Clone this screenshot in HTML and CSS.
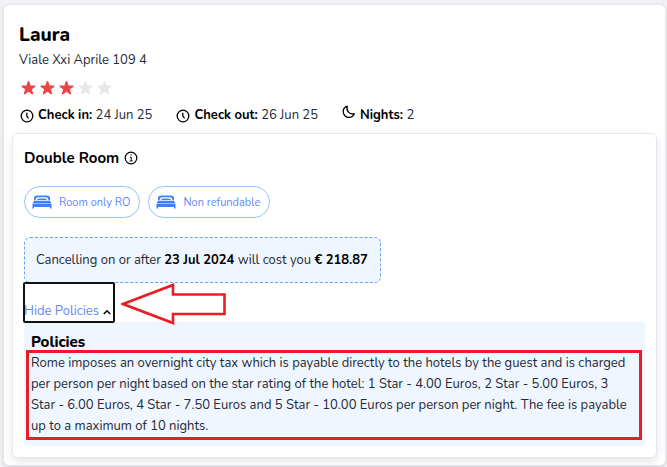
FILE: index.html
```html
<!DOCTYPE html>
<html lang="en">
<head>
    <meta charset="UTF-8">
    <meta name="viewport" content="width=device-width, initial-scale=1.0">
    <title>Laura - Booking</title>
    <link rel="stylesheet" href="styles.css">
</head>
<body>
    <svg class="symbols" aria-hidden="true">
        <symbol id="star" viewBox="0 0 20 20">
            <path d="M9.05 2.93c.3-.92 1.6-.92 1.9 0l1.5 4.6h4.84c.97 0 1.37 1.24.59 1.81l-3.92 2.85 1.5 4.6c.3.92-.76 1.69-1.54 1.12L10 15.06l-3.92 2.85c-.78.57-1.84-.2-1.54-1.12l1.5-4.6-3.92-2.85c-.78-.57-.38-1.81.59-1.81h4.84z" fill="currentColor"/>
        </symbol>
        <symbol id="clock" viewBox="0 0 14 14">
            <circle cx="7" cy="7" r="5.8" fill="none" stroke="currentColor" stroke-width="1.3"/>
            <path d="M6.8 3.8v3.3l1.8 2.2" fill="none" stroke="currentColor" stroke-width="1.3"/>
        </symbol>
        <symbol id="moon" viewBox="0 0 14 14">
            <path d="M5.2 1.2C2.8 2 1.2 4 1.2 6.6c0 3.2 2.5 5.8 5.8 5.8 2.4 0 4.4-1.4 5.4-3.6C7.4 9.8 4 6 5.2 1.2z" fill="none" stroke="currentColor" stroke-width="1.3" stroke-linejoin="round"/>
        </symbol>
        <symbol id="bed" viewBox="0 0 20 14">
            <path d="M2 5.2V3Q2 .5 5 .5h10q3 0 3 2.5v2.2h-1.5Q16 2.2 14 2.2H6Q4 2.2 3.5 5.2z" fill="currentColor"/>
            <path d="M5 5q.3-1.5 1.8-1.5h6.4Q14.7 3.5 15 5zM2 5.7h16l1.5 2.8H.5zM.5 9h19v4.5H18V12H2v1.5H.5z" fill="currentColor"/>
        </symbol>
    </svg>

    <main class="hotel">
        <header class="hotel-header">
            <h1 class="hotel-name">Laura</h1>
            <p class="hotel-address">Viale Xxi Aprile 109 4</p>
            <div class="stars" role="img" aria-label="3 of 5 stars">
                <svg class="star active"><use href="#star"/></svg>
                <svg class="star active"><use href="#star"/></svg>
                <svg class="star active"><use href="#star"/></svg>
                <svg class="star"><use href="#star"/></svg>
                <svg class="star"><use href="#star"/></svg>
            </div>
            <div class="dates">
                <div class="date"><svg class="icon"><use href="#clock"/></svg><span><b>Check in:</b> 24 Jun 25</span></div>
                <div class="date"><svg class="icon"><use href="#clock"/></svg><span><b>Check out:</b> 26 Jun 25</span></div>
                <div class="date"><svg class="icon icon-moon"><use href="#moon"/></svg><span><b>Nights:</b> 2</span></div>
            </div>
        </header>

        <section class="room">
            <h2 class="room-name">Double Room
                <svg class="icon" viewBox="0 0 14 14">
                    <circle cx="7" cy="7" r="5.8" fill="none" stroke="currentColor" stroke-width="1.2"/>
                    <path d="M5.8 6.3H7.2V9.8M5.8 9.9H8.6M6.4 4H7.8" fill="none" stroke="currentColor" stroke-width="1"/>
                </svg>
            </h2>
            <div class="tags">
                <span class="tag"><svg class="bed"><use href="#bed"/></svg>Room only RO</span>
                <span class="tag"><svg class="bed"><use href="#bed"/></svg>Non refundable</span>
            </div>
            <p class="cancellation">Cancelling on or after <b>23 Jul 2024</b> will cost you <b>€ 218.87</b></p>
            <div class="toggle-row">
                <button class="toggle" type="button" aria-expanded="true" aria-controls="policies">Hide Policies
                    <svg class="chevron" viewBox="0 0 8 6"><path d="M.8 5L4 1.8 7.2 5" fill="none" stroke="currentColor" stroke-width="1.6"/></svg>
                </button>
                <svg class="arrow" viewBox="0 0 106 42" aria-hidden="true">
                    <path d="M2 21L52 2V11.5H103.5V31H52V40z" fill="none" stroke="currentColor" stroke-width="2.6"/>
                </svg>
            </div>
            <div class="policies" id="policies">
                <h3 class="policies-title">Policies</h3>
                <p class="policies-text">Rome imposes an overnight city tax which is payable directly to the hotels by the guest and is charged per person per night based on the star rating of the hotel: 1 Star - 4.00 Euros, 2 Star - 5.00 Euros, 3 Star - 6.00 Euros, 4 Star - 7.50 Euros and 5 Star - 10.00 Euros per person per night. The fee is payable up to a maximum of 10 nights.</p>
            </div>
        </section>
    </main>
</body>
</html>
```
FILE: styles.css
```css
* {
    margin: 0;
    padding: 0;
    box-sizing: border-box;
}

body {
    padding: 4px 1px 1px 3px;
    background-color: #f0f1f4;
    color: #1f2937;
    font-family: Nunito, Lato, sans-serif;
    font-size: 13px;
    font-weight: 400;
    line-height: 21px;
}

b {
    color: #000;
    font-weight: 700;
}

.symbols {
    display: none;
}

.hotel {
    padding: 16px 8px 7px;
    border: 1px solid #e5e7eb;
    border-radius: 6px;
    background-color: #fff;
    box-shadow: 0 1px 3px rgba(0, 0, 0, 0.15);
}

.hotel-header {
    padding: 0 7px 7px;
}

.hotel-name {
    color: #000;
    font-size: 19px;
    font-weight: 800;
    line-height: 28px;
}

.hotel-address {
    line-height: 22px;
}

.stars {
    display: flex;
    gap: 2px;
    padding: 8px 1px 9px;
}

.star {
    width: 17px;
    height: 17px;
    color: #e5e7eb;
}

.star.active {
    color: #ef4444;
}

.dates {
    display: flex;
    gap: 24px;
    padding-left: 1px;
}

.date {
    display: flex;
    align-items: center;
    gap: 4px;
    line-height: 21px;
}

.icon {
    width: 14px;
    height: 14px;
    color: #000;
}

.icon-moon {
    align-self: flex-start;
}

.room {
    padding: 12px 11px 11px;
    border: 1px solid #e5e7eb;
    border-radius: 6px;
    box-shadow: 0 4px 10px rgba(0, 0, 0, 0.1);
}

.room-name {
    display: flex;
    align-items: center;
    gap: 5px;
    color: #000;
    font-size: 15px;
    font-weight: 700;
    line-height: 24px;
}

.tags {
    display: flex;
    gap: 8px;
    padding: 16px 0 19px;
}

.tag {
    display: flex;
    align-items: center;
    gap: 7px;
    height: 32px;
    padding: 0 9px 0 7px;
    border: 1px solid #93c5fd;
    border-radius: 16px;
    color: #6387f5;
    font-size: 11px;
}

.bed {
    width: 20px;
    height: 14px;
    color: #3b82f6;
}

.cancellation {
    width: fit-content;
    padding: 12px 12px 11px 11px;
    border: 1px dashed #60a5fa;
    border-radius: 6px;
    background-color: #eff6ff;
}

.toggle-row {
    display: flex;
    align-items: flex-start;
    gap: 7px;
    height: 39px;
}

.toggle {
    display: flex;
    align-items: center;
    gap: 4px;
    height: 39px;
    padding: 18px 3px 0 0;
    border: 0;
    border-radius: 1px;
    outline: 2px solid #101010;
    outline-offset: -1px;
    background-color: #fff;
    color: #6387f5;
    font: inherit;
}

.chevron {
    width: 8px;
    height: 6px;
    color: #000;
}

.arrow {
    width: 106px;
    height: 42px;
    color: #ed1c24;
}

.policies {
    padding: 12px 3px 6px 2px;
    border-radius: 4px;
    background-color: #eff6ff;
}

.policies-title {
    padding-left: 5px;
    color: #000;
    font-size: 15px;
    font-weight: 800;
    line-height: 16px;
}

.policies-text {
    padding: 0 5px 0 2px;
    border: 3px solid #ed1c24;
}
```
